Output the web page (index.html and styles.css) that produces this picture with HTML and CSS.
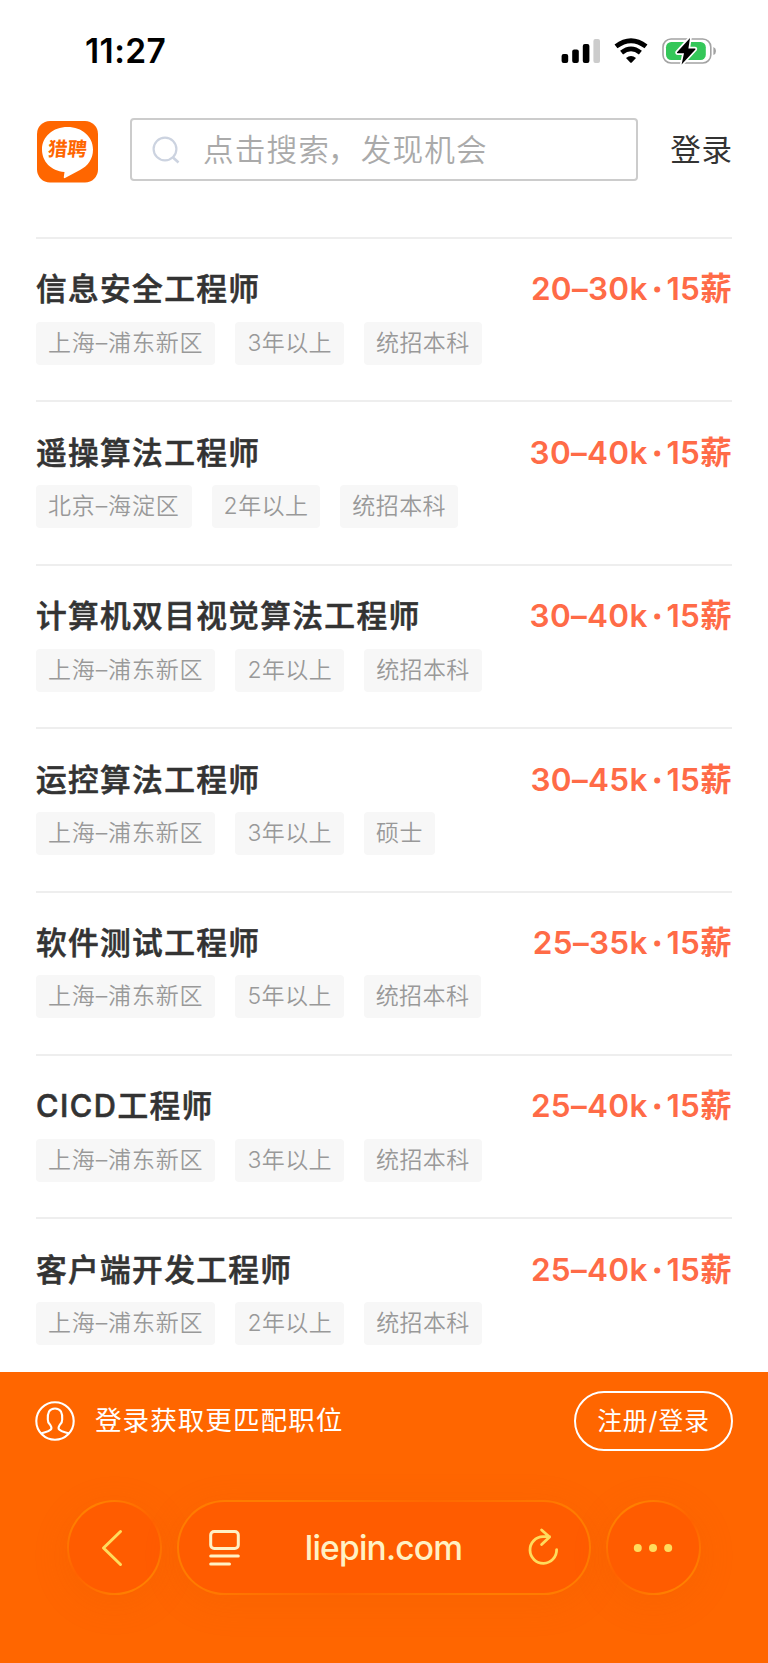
FILE: index.html
```html
<!DOCTYPE html>
<html lang="zh-CN">
<head>
<meta charset="utf-8">
<title>猎聘</title>
<link rel="stylesheet" href="styles.css">
</head>
<body>
<div class="phone">
  <div class="status">
    <span class="time">11:27</span>
    <svg class="status-icons" width="156" height="30" viewBox="0 0 156 30">
      <rect x="1.6" y="17" width="6.6" height="9" rx="2"/>
      <rect x="12.2" y="12.5" width="6.6" height="13.5" rx="2"/>
      <rect x="22.8" y="7" width="6.6" height="19" rx="2"/>
      <rect x="33.4" y="2" width="6.6" height="24" rx="2" fill="#ccc"/>
      <g fill="none" stroke="#000" stroke-width="4.8">
        <path d="M56 9.4Q71 -2 86 9.4"/>
        <path d="M61.6 15.6Q71 8.2 80.4 15.6"/>
      </g>
      <path d="M66 21Q71 17 76 21L71.8 25.4Q71 26.2 70.2 25.4Z"/>
      <rect x="103" y="2" width="47.8" height="24" rx="8" fill="none" stroke="#a3a3a3" stroke-width="1.6"/>
      <path d="M153.4 10Q156 11 156 14T153.4 18Z" fill="#a3a3a3"/>
      <rect x="106" y="5" width="39.8" height="18" rx="5.2" fill="#34c759"/>
      <path d="M130 1L117 15.2Q116.6 16.2 117.8 16.2H124L121.6 27.4L135.4 12.4Q135.8 11.4 134.8 11.4H128.4Z" stroke="#fff" stroke-width="3.4" paint-order="stroke"/>
    </svg>
  </div>
  <header class="header">
    <div class="logo">
      <svg class="logo-art" width="61" height="62" viewBox="0 0 61 62">
        <rect width="61" height="61.5" rx="13" fill="#f60"/>
        <path d="M30.5 6C45 6 56 15.5 56 28.5C56 38 51 45 43 49L28 57Q26.5 57.5 26.8 56L27.5 51C14 50 5 40.5 5 28.5C5 15.5 16 6 30.5 6Z" fill="#fff"/>
      </svg>
      <span class="logo-text">猎聘</span>
    </div>
    <div class="search">
      <svg width="28" height="28" viewBox="0 0 28 28" fill="none" stroke="#ccd3e0" stroke-width="2.2"><circle cx="13" cy="13" r="11.4"/><path d="M21 21.5L26.5 26.5" stroke-width="2.6"/></svg>
      <span>点击搜索<i>，</i>发现机会</span>
    </div>
    <a class="login">登录</a>
  </header>
  <main class="jobs">
    <article class="job"><div class="row"><h2>信息安全工程师</h2><b>20–30k<i>·</i>15薪</b></div><div class="tags"><span>上海–浦东新区</span><span>3年以上</span><span>统招本科</span></div></article>
    <article class="job"><div class="row"><h2>遥操算法工程师</h2><b>30–40k<i>·</i>15薪</b></div><div class="tags"><span>北京–海淀区</span><span>2年以上</span><span>统招本科</span></div></article>
    <article class="job"><div class="row"><h2>计算机双目视觉算法工程师</h2><b>30–40k<i>·</i>15薪</b></div><div class="tags"><span>上海–浦东新区</span><span>2年以上</span><span>统招本科</span></div></article>
    <article class="job"><div class="row"><h2>运控算法工程师</h2><b>30–45k<i>·</i>15薪</b></div><div class="tags"><span>上海–浦东新区</span><span>3年以上</span><span>硕士</span></div></article>
    <article class="job"><div class="row"><h2>软件测试工程师</h2><b>25–35k<i>·</i>15薪</b></div><div class="tags"><span>上海–浦东新区</span><span>5年以上</span><span>统招本科</span></div></article>
    <article class="job"><div class="row"><h2><em>CICD</em>工程师</h2><b>25–40k<i>·</i>15薪</b></div><div class="tags"><span>上海–浦东新区</span><span>3年以上</span><span>统招本科</span></div></article>
    <article class="job"><div class="row"><h2>客户端开发工程师</h2><b>25–40k<i>·</i>15薪</b></div><div class="tags"><span>上海–浦东新区</span><span>2年以上</span><span>统招本科</span></div></article>
  </main>
  <footer class="bottom">
    <div class="signup">
      <svg width="40" height="40" viewBox="0 0 40 40" fill="none" stroke="#fff" stroke-width="2.1" stroke-linejoin="round">
        <circle cx="20" cy="20" r="18.7"/>
        <path d="M6.2 32.6C9.5 31.3 13.5 30.7 15.8 28.5C17 27.3 16.3 25.5 15.3 24C13.8 22.5 12.6 21 12.8 18.5C12.5 12 14 7.5 20 7.5S27.5 12 27.2 18.5C27.4 21 26.2 22.5 24.7 24C23.7 25.5 23 27.3 24.2 28.5C26.5 30.7 30.5 31.3 33.8 32.6"/>
      </svg>
      <p>登录获取更匹配职位</p>
      <a class="register">注册/登录</a>
    </div>
    <nav class="browser">
      <div class="glass round back">
        <svg width="24" height="40" viewBox="0 0 24 40" fill="none" stroke="#ffdc5c" stroke-width="3" stroke-linecap="round" stroke-linejoin="round"><path d="M20.500 3.500L3.500 20L20.500 36.500"/></svg>
      </div>
      <div class="glass address">
        <svg width="31" height="37" viewBox="0 0 31 37" fill="none" stroke="#fff1c4" stroke-width="3" stroke-linecap="round"><rect x="1.7" y="2.5" width="27.6" height="17" rx="3.5"/><path d="M1.7 27H29.3M1.7 35H20.5"/></svg>
        <span>liepin.com</span>
        <svg width="32" height="38" viewBox="0 0 32 38" fill="none" stroke="#ffdc5c" stroke-width="2.8" stroke-linecap="round" stroke-linejoin="round"><path d="M29.6 22.6A13.3 13.3 0 1 1 16 9.7H22.6M14.6 3L22.6 10L14.6 17.6"/></svg>
      </div>
      <div class="glass round">
        <svg width="40" height="10" viewBox="0 0 40 10" fill="#ffdc5c"><circle cx="3.8" cy="5" r="4"/><circle cx="19" cy="5" r="4"/><circle cx="34.2" cy="5" r="4"/></svg>
      </div>
    </nav>
  </footer>
</div>
</body>
</html>
```
FILE: styles.css
```css
* { box-sizing: border-box; }
body { margin: 0; background: #fff; font-family: Inter, "Noto Sans CJK SC", sans-serif; color: #333; }
.phone { width: 768px; height: 1663px; overflow: hidden; display: flex; flex-direction: column; }
svg { display: block; flex: none; overflow: visible; }

.status { height: 118px; padding: 37px 52px 0 85px; display: flex; justify-content: space-between; align-items: flex-start; flex: none; }
.time { font-size: 33.5px; line-height: 29px; font-weight: 600; color: #000; letter-spacing: 0.4px; }
.status-icons { margin-left: auto; }

.header { height: 63px; padding: 0 36px; display: flex; align-items: center; flex: none; }
.logo { position: relative; width: 61px; height: 62px; margin: 4px 32px 0 1px; }
.logo-text { position: absolute; left: 11px; top: 16px; width: 41px; font-size: 19.5px; line-height: 24px; font-weight: 700; color: #f60; transform: skewX(-6deg); white-space: nowrap; }
.search { width: 508px; height: 63px; border: 2px solid #ccc; border-radius: 4px; display: flex; align-items: center; padding-left: 20px; gap: 23px; color: #aaa; }
.search span { padding-top: 1px; font-size: 30.7px; line-height: 40px; letter-spacing: 1.05px; font-weight: 350; white-space: nowrap; }
.search i { font-style: normal; display: inline-block; text-indent: -2px; margin-right: 1px; }
.login { padding-top: 1px; margin-left: auto; font-size: 30.5px; line-height: 40px; letter-spacing: 0.9px; margin-right: -1px; white-space: nowrap; }

.jobs { margin-top: 56px; padding: 0 36px; height: 1135.4px; flex: none; overflow: hidden; }
.job { height: 163.38px; border-top: 2px solid #eee; padding-top: 28.4px; }
.row { height: 44px; display: flex; justify-content: space-between; align-items: center; }
.row h2 { margin: 0; font-size: 30.7px; line-height: 44px; font-weight: 500; letter-spacing: 1.35px; white-space: nowrap; -webkit-text-stroke: 0.6px #333; }
.row em { font-style: normal; letter-spacing: 1.5px; }
.row b { font-size: 31.5px; line-height: 44px; font-weight: 600; color: #ff6b47; letter-spacing: 0.3px; white-space: nowrap; }
.row i { font-style: normal; margin: 0 4px 0 4.5px; -webkit-text-stroke: 1px #ff6b47; }
.tags { margin-top: 10.6px; display: flex; gap: 20px; }
.tags span { height: 43px; padding: 0 12px; border-radius: 4px; background: #f7f7f7; color: #999; font-size: 23px; line-height: 42px; font-weight: 350; letter-spacing: 0.4px; white-space: nowrap; }
.tags span:first-child { letter-spacing: 0.85px; }

.bottom { flex: 1; background: #f60; display: flex; flex-direction: column; }
.signup { height: 98px; padding: 0 35px; display: flex; align-items: center; color: #fff; }
.signup p { margin: -2px 0 0 20px; font-size: 26.6px; line-height: 40px; letter-spacing: 1px; white-space: nowrap; }
.register { margin-left: auto; width: 159px; height: 60px; padding-bottom: 5px; border: 2px solid #fff; border-radius: 30px; display: flex; align-items: center; justify-content: center; font-size: 24.7px; letter-spacing: 1px; white-space: nowrap; }
.browser { margin-top: 30px; padding: 0 67px; display: flex; justify-content: space-between; }
.glass {
  height: 95px; border: 2px solid transparent; border-radius: 48px; display: flex; align-items: center;
  background: linear-gradient(#ff5c00, #ff5c00) padding-box, linear-gradient(135deg, #ff7c00 20%, #ff6800 50%, #ff7c00 80%) border-box;
  box-shadow: 0 8px 36px rgba(220, 90, 0, 0.16);
}
.round { width: 95px; justify-content: center; background: linear-gradient(#ff5c00, #ff5c00) padding-box, linear-gradient(145deg, #ff8000 15%, #ff6200 50%, #ff8000 85%) border-box; }
.back { padding-right: 6px; }
.address { width: 414px; padding: 0 30px 0 30px; justify-content: space-between; color: #fff1c4; font-size: 33.5px; font-weight: 500; }
.address span { letter-spacing: -0.8px; }
.address svg:last-child { margin-top: -4px; }
```
